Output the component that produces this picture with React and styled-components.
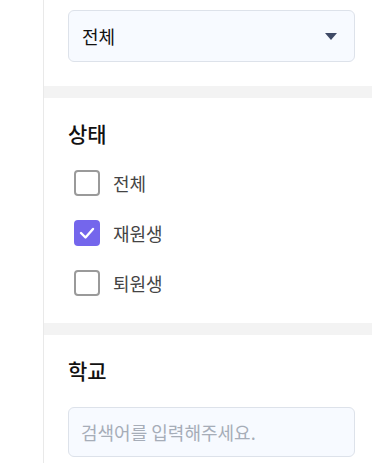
import React from "react";
import styled, { createGlobalStyle } from "styled-components";

const Global = createGlobalStyle`
  html, body { margin: 0; padding: 0; background: #fff; }
  body { font-family: "Noto Sans CJK KR", "Noto Sans", sans-serif; }
  * { box-sizing: border-box; }
`;

const Page = styled.div`
  display: flex;
  width: 372px;
  height: 463px;
  overflow: hidden;
`;

const Gutter = styled.div`
  width: 44px;
  flex: none;
  border-right: 1px solid #e9e9e9;
`;

const Panel = styled.div`
  flex: 1;
  display: flex;
  flex-direction: column;
`;

const Section = styled.div`
  padding: ${(p) => p.$pad};
  padding-left: 24px;
  padding-right: 17px;
  display: flex;
  flex-direction: column;
`;

const Band = styled.div`
  height: 12px;
  background: #f3f3f3;
  flex: none;
`;

const Select = styled.div`
  height: 52px;
  background: #f7faff;
  border: 1px solid #dde2ea;
  border-radius: 6px;
  display: flex;
  align-items: center;
  justify-content: space-between;
  padding: 0 17px 0 13px;
  font-size: 18px;
  color: #111;
`;

const Heading = styled.div`
  font-size: 21px;
  font-weight: 500;
  line-height: 30px;
  color: #111;
  margin-bottom: ${(p) => p.$gap}px;
`;

const Row = styled.label`
  height: 50px;
  display: flex;
  align-items: center;
  gap: 13px;
  padding-left: 6px;
  font-size: 18px;
  color: #444;
`;

const Box = styled.span`
  width: 26px;
  height: 26px;
  border-radius: 4px;
  border: ${(p) => (p.$checked ? "none" : "2px solid #9a9a9a")};
  background: ${(p) => (p.$checked ? "#7466ec" : "#fff")};
  display: flex;
  align-items: center;
  justify-content: center;
`;

const Input = styled.div`
  height: 50px;
  background: #f7faff;
  border: 1px solid #dde2ea;
  border-radius: 6px;
  display: flex;
  align-items: center;
  padding-left: 12px;
  font-size: 18px;
  color: #a6adb8;
`;

const Caret = () => (
  <svg width="12" height="7" viewBox="0 0 12 7">
    <path d="M0 0 H12 L6 7 Z" fill="#3f4a66" />
  </svg>
);

const Check = () => (
  <svg width="16" height="14" viewBox="0 0 16 14">
    <path d="M2 7 L6.5 11.5 L14 3" fill="none" stroke="#fff" strokeWidth="2.4" strokeLinecap="round" strokeLinejoin="round" />
  </svg>
);

const items = [
  { label: "전체", checked: false },
  { label: "재원생", checked: true },
  { label: "퇴원생", checked: false },
];

export default function App() {
  return (
    <Page>
      <Global />
      <Gutter />
      <Panel>
        <Section $pad="10px 0 24px">
          <Select>
            <span>전체</span>
            <Caret />
          </Select>
        </Section>
        <Band />
        <Section $pad="20px 0 15px">
          <Heading $gap={10}>상태</Heading>
          {items.map((it) => (
            <Row key={it.label}>
              <Box $checked={it.checked}>{it.checked && <Check />}</Box>
              {it.label}
            </Row>
          ))}
        </Section>
        <Band />
        <Section $pad="20px 0 0">
          <Heading $gap={22}>학교</Heading>
          <Input>검색어를 입력해주세요.</Input>
        </Section>
      </Panel>
    </Page>
  );
}
